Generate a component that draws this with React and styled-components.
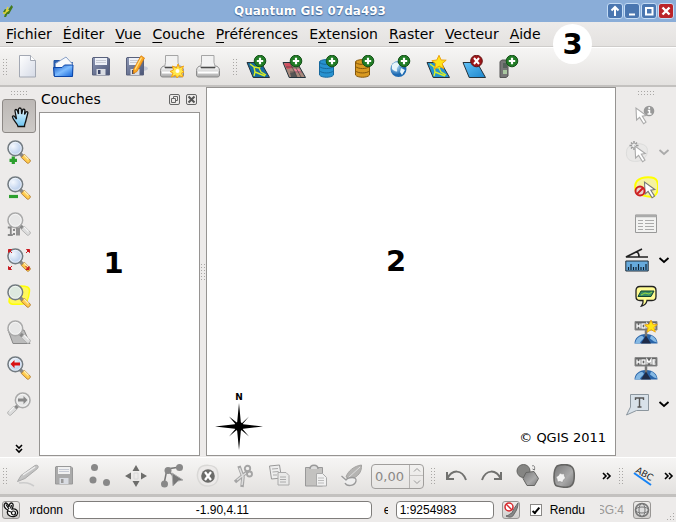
import React from "react";
import styled, { createGlobalStyle, css } from "styled-components";

const GlobalStyle = createGlobalStyle`
  *, *::before, *::after { box-sizing: border-box; }
  body { margin: 0; background: #edebea; color: #000; font-family: "DejaVu Sans", sans-serif; font-size: 14px; }
  button { font: inherit; color: inherit; border: 0; background: none; padding: 0; margin: 0; }
  input { font: inherit; color: inherit; margin: 0; min-width: 0; }
`;

const Window = styled.div`
  display: flex;
  flex-direction: column;
  min-height: 100vh;
`;

const TitleBar = styled.header`
  display: flex;
  align-items: center;
  height: 22px;
  flex: none;
  padding: 0 2px;
  background: #8aadd8;
`;

const TitleSide = styled.div`
  display: flex;
  width: 72px;
  gap: 1px;
  justify-content: ${(p) => (p.$end ? "flex-end" : "flex-start")};
`;

const Title = styled.h1`
  flex: 1;
  margin: 0;
  padding-right: 56px;
  text-align: center;
  font-size: 12px;
  line-height: 20px;
  color: #fff;
  text-shadow: 0 1px 1px #3d6292, 0 0 1px #4b6f9e;
`;

const WindowButton = styled.button`
  display: grid;
  place-items: center;
  width: 16px;
  height: 16px;
  border: 1px solid #c5dcf5;
  border-radius: 3px;
  background: ${(p) => (p.$close ? "#bb2429" : "#4a76b0")};
`;

const MenuBar = styled.nav`
  display: flex;
  align-items: center;
  flex: none;
  height: 25px;
  padding-left: 6px;
  gap: 11px;
  background: linear-gradient(#edebea, #e4e2e0);
  border-bottom: 1px solid #cfcdcb;
`;

const MenuButton = styled.button`
  line-height: 20px;
  white-space: nowrap;
  font-size: 14px;
`;

const Mnemonic = styled.span`
  text-decoration: underline;
  text-decoration-thickness: 1px;
  text-underline-offset: 3px;
  text-decoration-skip-ink: none;
`;

const ToolBar = styled.div`
  display: flex;
  align-items: center;
  flex: none;
  height: 40px;
  padding-left: 3px;
  background: linear-gradient(#f6f5f4, #e3e1df);
  border-top: 1px solid #fff;
  border-bottom: ${(p) => (p.$bottom ? "3px" : "2px")} solid #c3c1bf;
`;

const Group = styled.div`
  display: flex;
  align-items: center;
  flex: none;
  padding-left: 2px;
`;

const Spacer = styled.div`
  flex: ${(p) => (p.$grow ? "1" : "0 0 7px")};
`;

const dots = css`
  background: linear-gradient(90deg, #a9a7a5 1px, transparent 1px) 0 0 / 3px 3px;
  mask: linear-gradient(#000 1px, transparent 1px) 0 0 / 3px 3px;
`;

const Grip = styled.span`
  flex: none;
  width: ${(p) => (p.$across ? "16px" : "5px")};
  height: ${(p) => (p.$across ? "5px" : "16px")};
  ${dots}
`;

const ToolButton = styled.button`
  display: grid;
  place-items: center;
  flex: none;
  width: ${(p) => p.$width || "36px"};
  height: 36px;
`;

const ActiveButton = styled(ToolButton)`
  width: 34px;
  height: 34px;
  margin: 1px;
  border: 1px solid #8d8986;
  border-radius: 3px;
  background: linear-gradient(#bcb8b5, #cdcac7);
`;

const Badge = styled.strong`
  position: absolute;
  top: 24px;
  left: 553px;
  display: grid;
  place-items: center;
  width: 39px;
  height: 40px;
  border-radius: 50%;
  background: #fff;
  font-size: 29px;
  line-height: 40px;
`;

const Workspace = styled.main`
  display: flex;
  flex: 1;
`;

const Rail = styled.aside`
  display: flex;
  flex-direction: column;
  align-items: center;
  flex: none;
  width: ${(p) => (p.$right ? "60px" : "39px")};
  padding-top: 3px;
  padding-right: ${(p) => (p.$right ? "0" : "2px")};
`;

const RailMore = styled(ToolButton)`
  height: 16px;
  margin-top: auto;
`;

const RailGrip = styled.div`
  display: flex;
  height: 8px;
  padding-top: 1px;
`;

const RailRow = styled.div`
  display: flex;
  align-items: center;
  align-self: stretch;
  gap: 3px;
  padding-left: 9px;
`;

const Dock = styled.section`
  display: flex;
  flex-direction: column;
  flex: none;
  width: 161px;
`;

const DockHeader = styled.header`
  display: flex;
  align-items: center;
  height: 25px;
  padding: 0 3px 0 2px;
  gap: 6px;
`;

const DockTitle = styled.h2`
  flex: 1;
  margin: 0;
  padding-bottom: 2px;
  font-weight: 400;
  font-size: 14px;
  line-height: 20px;
`;

const DockButton = styled.button`
  display: grid;
  place-items: center;
  width: 11px;
  height: 11px;
`;

const Layers = styled.div`
  display: grid;
  place-items: center;
  flex: 1;
  padding-right: 12px;
  padding-bottom: 42px;
  margin-bottom: 1px;
  background: #fff;
  border: 1px solid #969492;
`;

const Splitter = styled.div`
  display: grid;
  place-items: center;
  flex: none;
  width: 6px;
`;

const MapView = styled.section`
  display: grid;
  grid-template-rows: 1fr auto;
  flex: 1;
  margin-bottom: 1px;
  background: #fff;
  border: 1px solid #969492;
`;

const Number = styled.strong`
  place-self: center;
  font-size: 29px;
  line-height: 36px;
`;

const MapCenter = styled.div`
  display: grid;
  padding: 40px 30px 0 0;
`;

const MapFooter = styled.div`
  display: flex;
  align-items: flex-end;
  justify-content: space-between;
  padding: 0 9px 4px 8px;
`;

const Copyright = styled.p`
  margin: 0;
  padding-bottom: 4px;
  font-size: 13px;
  line-height: 18px;
`;

const Spin = styled.div`
  display: flex;
  flex: none;
  width: 53px;
  height: 25px;
  margin: 0 7px 0 1px;
  border: 1px solid #a09e9c;
  border-radius: 4px;
  color: #8a8886;
`;

const SpinInput = styled.input`
  flex: 1;
  width: 37px;
  border: 0;
  border-right: 1px solid #b5b3b1;
  padding: 0 0 0 3px;
  background: transparent;
  font-size: 13px;
`;

const SpinButtons = styled.div`
  display: grid;
  grid-template-rows: 1fr 1fr;
  width: 13px;
`;

const SpinButton = styled.button`
  display: grid;
  place-items: center;
  &:first-child { border-bottom: 1px solid #c5c3c1; }
`;

const StatusBar = styled.footer`
  display: flex;
  align-items: center;
  flex: none;
  height: 25px;
  padding-left: 2px;
  background: #edebea;
  font-family: "Liberation Sans", sans-serif;
  font-size: 12px;
`;

const StatusButton = styled.button`
  display: grid;
  place-items: center;
  flex: none;
  width: 18px;
  height: 18px;
  border: 1px solid #989694;
  border-radius: 3px;
  background: linear-gradient(#eeecea, #d2d0ce);
`;

const Clipped = styled.label`
  display: flex;
  flex: none;
  justify-content: flex-end;
  width: 33px;
  margin: 0 10px;
  overflow: hidden;
  line-height: 16px;
`;

const ScaleLabel = styled(Clipped)`
  justify-content: flex-start;
  width: 4px;
  margin: 0 8px 0 12px;
`;

const Projection = styled(Clipped)`
  width: 24px;
  margin: 0 9px 0 15px;
  color: #9a9896;
`;

const Field = styled.input`
  height: 18px;
  border: 1px solid #7f7d7b;
  border-radius: 4px;
  background: #fff;
  padding: 0 3px;
`;

const CoordinateField = styled(Field)`
  flex: 1;
  text-align: center;
`;

const ScaleField = styled(Field)`
  width: 98px;
  flex: none;
  margin-right: 8px;
`;

const Render = styled.label`
  display: flex;
  align-items: center;
  flex: none;
  gap: 8px;
  margin-left: 10px;
  line-height: 16px;
`;

const Check = styled.input`
  display: grid;
  place-items: center;
  appearance: none;
  width: 12px;
  height: 12px;
  border: 1px solid #8a8886;
  background: #fff;
  &:checked::after {
    content: "";
    width: 4px;
    height: 8px;
    border: solid #000;
    border-width: 0 2px 2px 0;
    transform: rotate(40deg);
  }
`;

const SizeGrip = styled.span`
  align-self: flex-end;
  flex: none;
  width: 12px;
  height: 12px;
  margin-left: 13px;
  clip-path: polygon(100% 0, 100% 100%, 0 100%);
  ${dots}
`;

const HiddenSvg = styled.svg`
  position: absolute;
`;

const Svg = ({ size = 24, children, ...rest }) => (
  <svg width={size} height={size} viewBox={`0 0 ${size} ${size}`} fill="none" aria-hidden="true" {...rest}>
    {children}
  </svg>
);

const Defs = () => (
  <HiddenSvg width="0" height="0" aria-hidden="true">
    <defs>
      <linearGradient id="paper" x1="0" y1="0" x2="1" y2="1"><stop stopColor="#fff" /><stop offset="1" stopColor="#d5dae6" /></linearGradient>
      <linearGradient id="blue" x1="0" y1="0" x2="1" y2="1"><stop stopColor="#0b4fc0" /><stop offset=".5" stopColor="#7ebcff" /><stop offset="1" stopColor="#1263d8" /></linearGradient>
      <linearGradient id="steel" x1="0" y1="0" x2="1" y2="1"><stop stopColor="#8e98b5" /><stop offset="1" stopColor="#4b5576" /></linearGradient>
      <linearGradient id="printer" x1="0" y1="0" x2="0" y2="1"><stop stopColor="#fff" /><stop offset="1" stopColor="#aaa" /></linearGradient>
      <linearGradient id="sky" x1="0" y1="0" x2="1" y2="1"><stop stopColor="#62c2f7" /><stop offset="1" stopColor="#1d86cc" /></linearGradient>
      <linearGradient id="hand" x1="0" y1="0" x2="0" y2="1"><stop stopColor="#eefaff" /><stop offset="1" stopColor="#6bc3ef" /></linearGradient>
      <linearGradient id="handle" x1="0" y1="1" x2="1" y2="0"><stop stopColor="#ef8a13" /><stop offset=".5" stopColor="#ffd257" /><stop offset="1" stopColor="#f08a10" /></linearGradient>
      <radialGradient id="glass" cx=".35" cy=".35"><stop stopColor="#f4f8fe" /><stop offset="1" stopColor="#c3d5ef" /></radialGradient>
      <radialGradient id="earth" cx=".35" cy=".35"><stop stopColor="#bfe4fa" /><stop offset="1" stopColor="#1e6ab2" /></radialGradient>
      <linearGradient id="grey" x1="0" y1="0" x2="1" y2="1"><stop stopColor="#777" /><stop offset=".6" stopColor="#aaa" /><stop offset="1" stopColor="#777" /></linearGradient>
      <linearGradient id="pale" x1="0" y1="0" x2="1" y2="1"><stop stopColor="#ddd" /><stop offset="1" stopColor="#aaa" /></linearGradient>
    </defs>
  </HiddenSvg>
);

const Plus = () => (
  <g>
    <circle cx="14" cy="6" r="5.8" fill="#217c25" stroke="#15521a" strokeWidth="1" />
    <path d="M14 2.8v6.4M10.8 6h6.4" stroke="#fff" strokeWidth="2.2" />
  </g>
);
const Star = ({ x = 0, y = 0, s = 1 }) => (
  <path transform={`translate(${x} ${y}) scale(${s})`} d="M0-8 2.3-2.8 8-2.6 3.6 1.2 5.4 7 .2 4-5 7.2-3.6 1.5-8-2 -2.4-2.8Z" fill="#ffe417" stroke="#eda20c" strokeWidth="1.1" />
);
const Plate = ({ fill }) => <path d="M1 7.5h14l8.5 15H7.2Z" fill={fill} stroke="#24333c" strokeWidth="1" />;
const Streams = () => <path d="m4 9 4 3 1 5 5 2 5 2M8 12l5 1 3-3M9 17l-1 4M13 13l2 4 5 3" stroke="#d8ee28" strokeWidth="1.4" />;
const Cylinder = ({ a, b }) => (
  <g stroke={b} strokeWidth="1">
    <path d="M1.5 7v13c2 3 12 3 14 0V7Z" fill={a} />
    <ellipse cx="8.5" cy="7" rx="7" ry="2.4" fill={a} />
    <path d="M1.5 11.3c2 3 12 3 14 0M1.5 15.7c2 3 12 3 14 0" />
  </g>
);
const Floppy = ({ muted, x = 4 }) => (
  <g transform={`translate(${x} 2)`}>
    <path d="M1 .5h15l1.5 1.5v16H.5V1Z" fill={muted ? "#aaa" : "url(#steel)"} stroke={muted ? "#999" : "#59617c"} />
    <path d="M3 1h12v7H3Z" fill={muted ? "#f0f0f0" : "#edf0f7"} />
    <path d="M4 3.5h10M4 5.5h10" stroke="#c6cad4" />
    <path d="M4.5 12h9v6h-9Z" fill="#d9dce2" /><path d="M6 13h2.5v4H6Z" fill={muted ? "#999" : "#3c4669"} />
  </g>
);
const Printer = () => (
  <g>
    <path d="M4.500 11c-2 0-4 2-4 4.500V20c0 1.500 1 2 2.500 2h18c1.500 0 2.500-.5 2.500-2v-4.500c0-2.500-2-4.500-4-4.500Z" fill="url(#printer)" stroke="#8b8b8b" />
    <path d="M5.500.5h12.500v7l1.500 5h-15l1-5Z" fill="#f2f2f2" stroke="#a5a5a5" />
    <path d="M5 12.500h14" stroke="#4a4a4a" strokeWidth="1.600" />
    <path d="M2 17.500h20" stroke="#fff" strokeWidth="2" />
  </g>
);
const Pencil = () => (
  <g>
    <path d="M17 .8 20.500 3 13 16.500l-3.800 2 .3-4.200Z" fill="#fba824" stroke="#da7d0d" strokeWidth=".8" />
    <path d="M17.500 2.500 11 14.500" stroke="#ffe187" strokeWidth="1.300" />
  </g>
);
const Lens = ({ muted, flip, children, under, fill }) => (
  <Svg>
    {under}
    <g transform={flip ? "translate(24 0) scale(-1 1)" : undefined}>
      <path d="m13 13.500 3 3" stroke="#888" strokeWidth="3.500" />
      <path d="m17.300 14.200 6 6c.8 1-1.800 3.800-3 3l-6-5.700Z" fill={muted ? "#dcdcdc" : "url(#handle)"} stroke={muted ? "#aaa" : "#b07a30"} strokeWidth=".8" />
      <path d="m17 15 4.500 4.500" stroke={muted ? "#f4f4f4" : "#fff0b5"} strokeWidth="1.200" />
      <circle cx="8.300" cy="8.300" r="7.300" fill={fill || (muted ? "#e7e7e7" : "url(#glass)")} stroke={muted ? "#aaa" : "#737b81"} strokeWidth="1.600" />
      <circle cx="8.300" cy="8.300" r="6" stroke="#fff" strokeOpacity=".7" strokeWidth=".8" />
    </g>
    {children}
  </Svg>
);
const Cursor = ({ x, y, fill = "#fff", stroke = "#777" }) => (
  <path transform={`translate(${x} ${y})`} d="m0 0 .6 12 3-2.600 4 6.400 2.400-1.600-3.700-6 4-.7Z" fill={fill} stroke={stroke} strokeWidth="1.100" />
);
const Home = ({ star }) => (
  <Svg>
    <path d="M.5 23.500c0-5 4-9.500 11.500-9.500s11.500 4.500 11.500 9.500Z" fill="#2a64a8" />
    <path d="M2 20.500c2-4 6-5.500 7.500-3.500s-3 3-3.500 6.500H1ZM17 15.500c3 1 5 3.500 6 7l-3-1-4-3Z" fill="#86b9e4" />
    <path d="M12 10v7" stroke="#777" strokeWidth="2.500" /><path d="m7 23.500 5-8 5 8Z" fill="#1f2c49" />
    <path d="M1 1.500h22v8.500H1Z" fill="#666" stroke="#8a8a8a" />
    <path d="M3 3.500v5M6 3.500v5M3 6h3M13 8.500v-5l2 3 2-3v5M21.500 4h-2.500v4h2.500M19 6h2.300" stroke="#fff" strokeWidth="1.300" />
    <rect x="8" y="4" width="3" height="4" stroke="#fff" strokeWidth="1.300" />
    {star && <Star x={17} y={6.500} s={0.8} />}
  </Svg>
);
const Chevron = ({ muted }) => <Svg size={12}><path d="m1.500 4 4.500 4 4.500-4" stroke={muted ? "#aaa" : "#000"} strokeWidth="1.800" /></Svg>;
const More = () => <Svg size={10}><path d="m1 2 3 3-3 3M5 2l3 3-3 3" stroke="#000" strokeWidth="1.600" /></Svg>;

const fileTools = [
  ["Nouveau", <Svg><path d="M3.500.5h11l5 5v16.500h-16Z" fill="url(#paper)" stroke="#a3a8b3" /><path d="M14.500.5v5h5" fill="#fff" stroke="#a3a8b3" /></Svg>],
  ["Ouvrir", <Svg><path d="M2 5.500h6l2 2h10.500V21H2Z" fill="#2d62b4" stroke="#2456a5" /><path d="M3.500 8.500 14 2l6.500 7v4h-17Z" fill="#f7f9fc" stroke="#8ba2c8" /><path d="M1.500 12.500h8.500l2.500-2.500h8.500l-.5 11.500H2.500Z" fill="url(#blue)" stroke="#0b45a8" /></Svg>],
  ["Enregistrer", <Svg><Floppy /></Svg>],
  ["Enregistrer sous", <Svg><ellipse cx="18" cy="13.500" rx="6" ry="2.500" fill="#c8ccda" /><Floppy x={2} /><Pencil /></Svg>],
  ["Nouveau composeur", <Svg><Printer /><path d="m18 9 1.500 4 4-2-1.500 4 2 2-2.500 1 1.500 4-4-1.500-2 2.500-1.500-3-4 2 1.500-4-3-1.500 3.500-1.500-1-4 4 2Z" fill="#ffe84b" stroke="#f6a514" /><circle cx="17.500" cy="16" r="2" fill="#fff" /></Svg>],
  ["Gestionnaire de composeurs", <Svg><Printer /></Svg>],
];
const layerTools = [
  ["Ajouter une couche vecteur", <Svg><Plate fill="#176c9d" /><Streams /><Plus /></Svg>],
  ["Ajouter une couche raster", <Svg><Plate fill="#a8897c" /><path d="m2 8.500 6-.5 3 5-6 1Z" fill="#d34e60" /><path d="m12 14 5 0 3 4h-6Z" fill="#f3849a" /><path d="m8 18 5-1 2 5H9Z" fill="#555" /><path d="m4 12 14 0M8 17h12M8 8l7 14M14 13l5 9" stroke="#444" strokeWidth=".7" /><Plus /></Svg>],
  ["Ajouter une couche PostGIS", <Svg><Cylinder a="#2792d0" b="#17689d" /><Plus /></Svg>],
  ["Ajouter une couche SpatiaLite", <Svg><Cylinder a="#d99a21" b="#84570c" /><Plus /></Svg>],
  ["Ajouter une couche WMS", <Svg><circle cx="8.500" cy="14" r="8" fill="url(#earth)" /><path d="M2 10c3-4 6-3 7-1s-3 3-2 6-3 1-5-1ZM11 13l4 2-3 5-2-3Z" fill="#e8f4fa" /><Plus /></Svg>],
  ["Nouvelle couche shapefile", <Svg><Plate fill="#2394cf" /><Streams /><Star x={13} y={7.500} s={0.9} /></Svg>],
  ["Supprimer la couche", <Svg><Plate fill="url(#sky)" /><circle cx="14.500" cy="6" r="5.800" fill="#9f1518" stroke="#64110f" /><path d="m12 3 5 6M17 3l-5 6" stroke="#fff" strokeWidth="2" /></Svg>],
  ["Outils GPS", <Svg><path d="M2 6.500 4 5h6v16l-2 1.500H2Z" fill="#777" stroke="#555" /><path d="M5 8h4v5H5Z" fill="#55615a" /><path d="M5 15h4v4H5Z" fill="#a9c7a0" /><Plus /></Svg>],
];
const arrowsOut = <g fill="#c91a20" stroke="#c91a20" strokeWidth="1"><path d="M1.500 1.500h3l-3 3ZM22.500 1.500h-3l3 3ZM1.500 21.500h3l-3-3ZM22 21.500h-3l3-3Z" /><path d="m3 3 2 2M21 3l-2 2M3 20l2-2M20.500 20l-2-2" /></g>;
const zoomTools = [
  ["Zoom +", <Lens><path d="M6.300 16.500v7.500M2.500 20.300H10" stroke="#2c9f2e" strokeWidth="3.200" /></Lens>],
  ["Zoom -", <Lens><path d="M2 20.500h9" stroke="#2c9f2e" strokeWidth="3.200" /></Lens>],
  ["Zoom 1:1", <Lens muted><path d="M.8 15.500h3v8M.8 23h5M10 15.500v8M12 15.500v8" stroke="#888" strokeWidth="1.800" /><path d="M7 17v2M7 21v2" stroke="#888" strokeWidth="2" /></Lens>],
  ["Zoom sur l'étendue", <Lens>{arrowsOut}</Lens>],
  ["Zoom sur la sélection", <Lens fill="#dde9df" under={<path d="M14 2c5 0 9 1 8.500 5S21 20 16 20 2 22 2 17s4-14 12-15Z" fill="#fff85b" stroke="#ffff08" strokeWidth="1.500" />} />],
  ["Zoom sur la couche", <Lens muted under={<path d="M1 10h16l6 13.500H6Z" fill="#bbb" stroke="#888" />} />],
  ["Zoom précédent", <Lens><path d="m3.500 8 4-4v2.600h5.500v2.800H7.500v2.800Z" fill="#d80f16" /></Lens>],
  ["Zoom suivant", <Lens muted flip><path d="m20.500 8-4-4v2.600H11v2.800h5.500v2.800Z" fill="#888" /></Lens>],
];
const rightTools = [
  ["Identifier", <Svg><circle cx="15" cy="7" r="5.300" fill="#999" /><path d="M13.800 6.500H15.500V10M13.500 10h4" stroke="#fff" strokeWidth="1.500" /><circle cx="15.200" cy="4" r="1" fill="#fff" /><Cursor x={2} y={4} stroke="#aaa" /></Svg>],
  ["Sélectionner", <Svg><path d="M2 9c3-7 18-7 20-1s-3 12-8 13-15 1-12-12Z" fill="#e9e8e7" stroke="#dcdcdb" /><path d="M9 1v9M4.500 5.500h9M6 2.500l6 6M12 2.500l-6 6" stroke="#999" strokeWidth="1.500" /><circle cx="9" cy="5.500" r="2" fill="#eee" /><Cursor x={10} y={6} stroke="#aaa" /></Svg>, "muted"],
  ["Désélectionner", <Svg><path d="M3 5c5-5 18-5 20 0s1 13-3 15S2 19 1.500 14 1 8 3 5Z" fill="#f5f1a2" stroke="#ffff00" strokeWidth="2" /><Cursor x={10.500} y={6} /><circle cx="6" cy="15" r="4.500" fill="#ead1ce" stroke="#ce2020" strokeWidth="1.900" /><path d="m3 18 6-6" stroke="#ce2020" strokeWidth="1.900" /></Svg>],
  ["Table d'attributs", <Svg><path d="M1.500 3h21v17.500h-21Z" fill="#f2f2f1" stroke="#999" /><path d="M1.500 4h21" stroke="#aaa" strokeWidth="2.500" /><path d="M4 8.500h5M11 8.500h9M4 11.500h5M11 11.500h9M4 14.500h5M11 14.500h9M4 17.500h5M11 17.500h9" stroke="#aaa" /></Svg>],
  ["Mesurer", <Svg><path d="M23 9H1L17 1M11 4c3 0 3 3 3 5" stroke="#222" strokeWidth="1.700" /><path d="M.8 13h22.400v10H.8Z" fill="#67aadc" stroke="#222f3a" /><path d="M3.500 22v-3M6 22v-6M8.500 22v-3M11 22v-3M13.500 22v-6M16 22v-3M18.500 22v-3M21 22v-6" stroke="#123" strokeWidth="1.200" /></Svg>, "menu"],
  ["Info-bulles", <Svg><path d="M6 2.500h12c3 0 4 1.500 4 4v6c0 3-1 4-4 4h-5c-.5 3-3 5-5.500 5.500 1.500-2 2-3 1.500-5.500H6c-3 0-4-1-4-4v-6c0-2.500 1-4 4-4Z" fill="#fffb92" stroke="#222" strokeWidth="1.300" /><path d="M7 7h13l-3 5.500H4Z" fill="#388d68" stroke="#143" /><path d="m7 11 4-2 4 1 3-2" stroke="#9ddb41" /></Svg>],
  ["Nouveau signet", <Home star />],
  ["Signets", <Home />],
  ["Annotation", <Svg><path d="M5.500 2.500h18v16h-12L1.500 23l4-8Z" fill="#d8e1e9" stroke="#8c969e" /><path d="M10.500 8V6h8v2M14.500 6v9M12.500 15h4" stroke="#555" strokeWidth="1.400" /></Svg>, "menu"],
];
const editTools = [
  ["Mode édition", <Svg><path d="M19 1.500c3-1 4 1 2.500 3L9 14.500 1.500 17.500l3.500-6Z" fill="url(#pale)" stroke="#aaa" /><path d="M7 11 19 3" stroke="#eee" strokeWidth="1.500" /><path d="M3 19c7-1 10 0 15 3" stroke="#ccc" strokeWidth="1.500" /></Svg>],
  ["Enregistrer les modifications", <Svg><Floppy muted x={3} /></Svg>],
  ["Ajouter une entité", <Svg><circle cx="6.500" cy="3.500" r="3.500" fill="#888" /><circle cx="5" cy="16" r="3.500" fill="#888" /><circle cx="18.500" cy="18.500" r="3.500" fill="#888" /></Svg>],
  ["Déplacer", <Svg><path d="M12 1 15.500 7h-7ZM12 23l-3.500-6h7ZM1 12l6-3.500v7ZM23 12l-6 3.500v-7Z" fill="#6d6d6b" /><path d="M10 9h4v6h-4Z" stroke="#d8d8d8" /></Svg>],
  ["Outil de nœud", <Svg><path d="m4 20 3-15L20 3M7 5l7 8" stroke="#777" strokeWidth="1.500" /><circle cx="4.500" cy="20" r="3.500" fill="#888" /><circle cx="8" cy="6.500" r="3.500" fill="#888" /><circle cx="19.500" cy="3.500" r="3.500" fill="#888" /><path d="m12 9 11 7-5 1-5 5Z" fill="#777" stroke="#aaa" /></Svg>],
  ["Supprimer la sélection", <Svg><path d="M3 5c3-5 16-5 18 1s2 15-8 16S-1 13 3 5Z" fill="#eceae9" stroke="#d9d8d6" strokeWidth="1.500" /><circle cx="12" cy="12" r="6.800" fill="#6c6c6a" /><path d="m9 8 6 8M15 8l-6 8" stroke="#fff" strokeWidth="2.200" /></Svg>],
  ["Couper", <Svg><path d="m7 2 4 11-1 10M16 7 3 18" stroke="#a5a5a5" strokeWidth="3.500" /><path d="m7.500 4 3.500 9-1 8M14 9 5 16" stroke="#ddd" strokeWidth="1.500" /><circle cx="15.500" cy="4.500" r="2.700" stroke="#a5a5a5" strokeWidth="1.900" /><circle cx="17.500" cy="10" r="2.500" stroke="#a5a5a5" strokeWidth="1.900" /></Svg>],
  ["Copier", <Svg><path d="m1.500 2 10-1 2 13-10 1Z" fill="#eee" stroke="#999" /><path d="M10 8.500h8l3 3v9.500H10Z" fill="#e9e9e8" stroke="#aaa" /><path d="m4 5 6-.5M4.500 8l6-.5M5 11h4M12 13h6M12 15.500h6M12 18h6" stroke="#aaa" /></Svg>],
  ["Coller", <Svg><path d="M1.500 3.500h17V22h-17Z" fill="#c3c2c0" stroke="#999" /><path d="M6 5c0-5 8-5 8 0" fill="#ddd" stroke="#999" strokeWidth="1.500" /><path d="M12.500 9.500h6l4 4V22h-10Z" fill="#f1f1f1" stroke="#aaa" /><path d="M14 14h6M14 16.500h6M14 19h6" stroke="#bbb" /></Svg>],
  ["Réshaper", <Svg><path d="M21.500 1C14 2 8 7 6 13l5 2c7-2 11-7 10.500-14Z" fill="#b5b4b2" stroke="#a4a3a1" /><path d="M20 3 8 14" stroke="#ddd" /><path d="m1.500 12 4.500 4c2-3 11-4 10 1s-9 6-11 2" fill="#eee" stroke="#999" strokeWidth="1.300" /></Svg>],
];
const historyTools = [
  ["Annuler", <Svg><path d="M3 15C8 5 18 5 22 16" stroke="#71716f" strokeWidth="2" /><path d="M3 8v7h7" stroke="#71716f" strokeWidth="2" /></Svg>],
  ["Rétablir", <Svg><path d="M21 15C16 5 6 5 2 16" stroke="#71716f" strokeWidth="2" /><path d="M21 8v7h-7" stroke="#71716f" strokeWidth="2" /></Svg>],
  ["Simplifier", <Svg><circle cx="7.500" cy="7" r="6.500" fill="#858583" stroke="#656563" /><path d="m10 8.500 8-1 4.500 7-4 7h-7.500l-4-7Z" fill="url(#grey)" stroke="#656563" /><path d="M16 2c2-1 3 0 2.500 4l-2-1" stroke="#777" /></Svg>],
  ["Ajouter un anneau", <Svg><path d="M5 2c5-2 12-2 15 1s3 14 0 18-11 2-15 1S1 6 5 2Z" fill="url(#grey)" stroke="#656563" strokeWidth="1.600" /><path d="m8 9 2 1 2-.5.5 2.500 1 2-2 2-1 2.500-2.500-1-2.500.5-.5-3-1-2 2.500-1.500Z" fill="#f3f3f2" stroke="#888" strokeWidth=".6" /></Svg>],
];
const menus = [["", "F", "ichier"], ["", "É", "diter"], ["", "V", "ue"], ["", "C", "ouche"], ["", "P", "références"], ["E", "x", "tension"], ["", "R", "aster"], ["", "V", "ecteur"], ["", "A", "ide"]];

const Tools = ({ items }) => items.map(([name, icon]) => <ToolButton key={name} aria-label={name}>{icon}</ToolButton>);

export default function App() {
  return (
    <Window>
      <GlobalStyle />
      <Defs />
      <TitleBar>
        <TitleSide><Svg size={12}><path d="M9.500 0 11 2 7 9H5.500L4 12H2l1-3-2-2 2-3 3 1Z" fill="#447a1e" /><path d="M6 2 4 7l3-2M1 8h3" stroke="#e5d637" strokeWidth="1.500" /></Svg></TitleSide>
        <Title>Quantum GIS 07da493</Title>
        <TitleSide $end>
          <WindowButton aria-label="Enrouler"><Svg size={12}><path d="M6 11V2M2.500 5.500 6 2l3.500 3.500" stroke="#fff" strokeWidth="2" /></Svg></WindowButton>
          <WindowButton aria-label="Réduire"><Svg size={12}><path d="M3 9.500h6" stroke="#fff" strokeWidth="2" /></Svg></WindowButton>
          <WindowButton aria-label="Agrandir"><Svg size={12}><rect x="3" y="3" width="6.500" height="6.500" stroke="#fff" strokeWidth="2" /></Svg></WindowButton>
          <WindowButton $close aria-label="Fermer"><Svg size={12}><path d="m2.500 2.500 7 7M9.500 2.500l-7 7" stroke="#fff" strokeWidth="2.400" /></Svg></WindowButton>
        </TitleSide>
      </TitleBar>
      <MenuBar>
        {menus.map(([before, key, after]) => <MenuButton key={key + after}>{before}<Mnemonic>{key}</Mnemonic>{after}</MenuButton>)}
      </MenuBar>
      <ToolBar>
        <Grip />
        <Group><Tools items={fileTools} /></Group>
        <Spacer />
        <Grip />
        <Group><Tools items={layerTools} /></Group>
      </ToolBar>
      <Badge>3</Badge>
      <Workspace>
        <Rail>
          <RailGrip><Grip $across /></RailGrip>
          <ActiveButton aria-label="Se déplacer" aria-pressed="true">
            <Svg><path d="M8 22.500c-1-4-5-6-5.500-9.500-.2-1.500 1.500-1.500 2.500 0l1.500 2-1.500-8c-.2-2 2-2 2.500 0l1 3V5.500c0-2 2.500-2 2.800 0l.3 4.500 1-4c.5-1.500 2.500-1 2.300.5l-.4 4 1.500-2.500c1-1 2.200 0 1.800 1l-2 8c-.4 2-1.500 3-1.300 5.500Z" transform="translate(3 0)" fill="url(#hand)" stroke="#111" strokeWidth="1.300" /></Svg>
          </ActiveButton>
          <Tools items={zoomTools} />
          <RailMore aria-label="Plus d'outils"><Svg size={10}><path d="m2 1 3 3 3-3M2 5l3 3 3-3" stroke="#000" strokeWidth="1.600" /></Svg></RailMore>
        </Rail>
        <Dock>
          <DockHeader>
            <DockTitle>Couches</DockTitle>
            <DockButton aria-label="Détacher"><Svg size={11}><rect x=".5" y=".5" width="10" height="10" rx="1.500" stroke="#666" /><path d="M4.500 4V2.500h4v4H7M2.500 4.500h4v4h-4Z" stroke="#666" /></Svg></DockButton>
            <DockButton aria-label="Fermer le panneau"><Svg size={11}><rect x=".5" y=".5" width="10" height="10" rx="1.500" stroke="#666" /><path d="m2.500 2.500 6 6M8.500 2.500l-6 6" stroke="#555" strokeWidth="2" /></Svg></DockButton>
          </DockHeader>
          <Layers><Number>1</Number></Layers>
        </Dock>
        <Splitter><Grip /></Splitter>
        <MapView>
          <MapCenter><Number>2</Number></MapCenter>
          <MapFooter>
            <svg width="48" height="58" viewBox="0 0 48 58" role="img" aria-label="Nord">
              <text x="24" y="7" textAnchor="middle" fontFamily="DejaVu Sans" fontWeight="700" fontSize="9">N</text>
              <path d="m24 10 2 21L48 33.500l-22 2.500L24 57l-2-21L0 33.500 22 31Z" />
              <path d="m14 23.500 11 8.500 9-8.500-8.500 10 8.500 10-10-8.500-10 8.500 8.500-10Z" />
              <circle cx="24" cy="33.500" r="4.500" />
            </svg>
            <Copyright>© QGIS 2011</Copyright>
          </MapFooter>
        </MapView>
        <Rail $right>
          <RailGrip><Grip $across /></RailGrip>
          {rightTools.map(([name, icon, menu]) => menu ? (
            <RailRow key={name}>
              <ToolButton $width="24px" aria-label={name}>{icon}</ToolButton>
              <ToolButton $width="24px" aria-label={`Options : ${name}`}><Chevron muted={menu === "muted"} /></ToolButton>
            </RailRow>
          ) : <ToolButton key={name} aria-label={name}>{icon}</ToolButton>)}
        </Rail>
      </Workspace>
      <ToolBar $bottom>
        <Grip />
        <Group><Tools items={editTools} /></Group>
        <Spin>
          <SpinInput aria-label="Rotation" defaultValue="0,00" />
          <SpinButtons>
            <SpinButton aria-label="Augmenter"><Svg size={8}><path d="m1 5.500 3-3 3 3" stroke="#999" /></Svg></SpinButton>
            <SpinButton aria-label="Diminuer"><Svg size={8}><path d="m1 2.500 3 3 3-3" stroke="#999" /></Svg></SpinButton>
          </SpinButtons>
        </Spin>
        <Grip />
        <Group><Tools items={historyTools} /></Group>
        <Spacer $grow />
        <ToolButton $width="24px" aria-label="Plus d'outils d'édition"><More /></ToolButton>
        <Grip />
        <Group>
          <ToolButton aria-label="Étiquetage">
            <Svg><path d="m2 9 17 12" stroke="#1683f5" strokeWidth="2" /><text transform="translate(3 8) rotate(30)" fontFamily="DejaVu Sans" fontSize="9" fill="#222">ABC</text></Svg>
          </ToolButton>
        </Group>
        <ToolButton $width="14px" aria-label="Plus d'étiquettes"><More /></ToolButton>
      </ToolBar>
      <StatusBar>
        <StatusButton aria-label="Basculer l'affichage"><Svg size={16}><path d="M1.500 2C3-.5 5 2 6 5c0-3 2-5 3.500-3.500S9.500 6 9 7c4-.5 6 1.500 5.500 4.500S10 15.500 7 14s-3-4-2-6C2 7 .5 4 1.500 2Z" fill="#fff" stroke="#111" strokeWidth="1.300" /><path d="m3 2.500 3 4.500M8.500 3 7.500 6.500M5 9l3 1" stroke="#111" strokeWidth="1.300" /><circle cx="10.500" cy="11" r="2" stroke="#111" strokeWidth="1.200" /></Svg></StatusButton>
        <Clipped htmlFor="coordinates">ordonn</Clipped>
        <CoordinateField id="coordinates" defaultValue="-1.90,4.11" />
        <ScaleLabel htmlFor="scale">e</ScaleLabel>
        <ScaleField id="scale" defaultValue="1:9254983" />
        <StatusButton aria-label="Arrêter le rendu"><Svg size={16}><path d="M15 1c-3 4-5 7-6 10-2 0-3 3-6 3 4 2 7 1 8-2 3-4 4-7 4-11Z" fill="#888" stroke="#666" /><circle cx="6" cy="5" r="4" fill="#fff" stroke="#d72b30" strokeWidth="1.500" /><path d="m3 2 6 6" stroke="#d72b30" strokeWidth="1.500" /></Svg></StatusButton>
        <Render><Check type="checkbox" defaultChecked />Rendu</Render>
        <Projection as="span">SG:4</Projection>
        <StatusButton aria-label="Projection"><Svg size={16}><circle cx="8" cy="8" r="6.500" fill="#ddd" stroke="#777" strokeWidth="1.500" /><ellipse cx="8" cy="8" rx="3" ry="6.500" stroke="#777" /><ellipse cx="8" cy="8" rx="6.500" ry="3" stroke="#777" /></Svg></StatusButton>
        <SizeGrip />
      </StatusBar>
    </Window>
  );
}
